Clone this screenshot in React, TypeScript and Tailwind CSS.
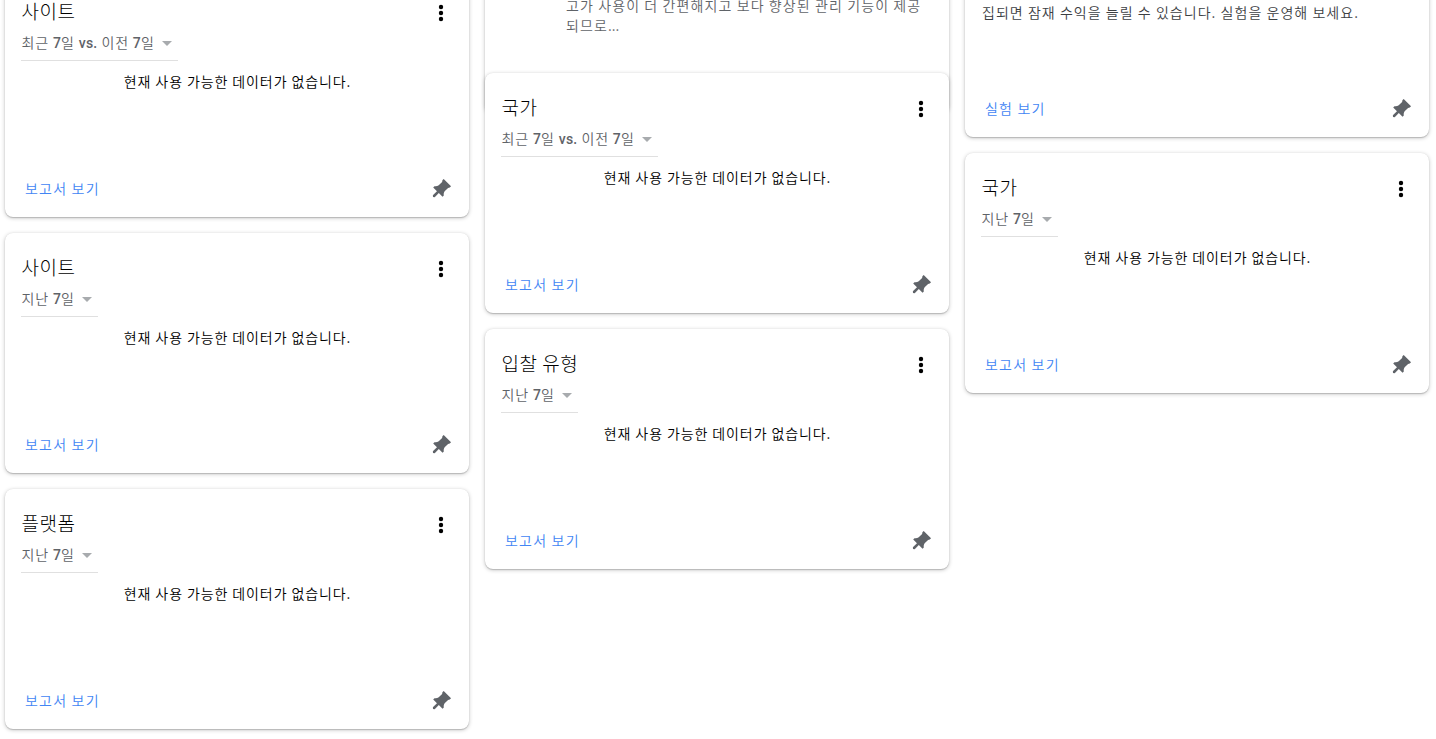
import type { ReactNode } from 'react';

type ReportCardProps = {
  title: string;
  period: ReactNode;
  className?: string;
};

const Num = ({ children }: { children: ReactNode }) => (
  <span className="font-medium tracking-[0.2px] font-['Roboto','Noto_Sans_CJK_KR',sans-serif]">{children}</span>
);

const lastWeek = (
  <>
    지난 <Num>7</Num>일
  </>
);

const weekOverWeek = (
  <>
    최근 <Num>7</Num>일 <Num>vs.</Num> 이전 <Num>7</Num>일
  </>
);

const PinIcon = () => (
  <svg viewBox="0 0 24 24" className="mt-0.5 mr-px h-6 w-6 shrink-0 fill-[#5f6368]">
    <path
      transform="rotate(45 12 12)"
      d="M6.8 1.6h10.4v1.8l-1 1.4v4.8c.3 1.6 1.2 2.8 2.4 3.6v1.8h-5.3v5.8l-1.3 1.1-1.3-1.1v-5.8H5.4v-1.8c1.2-.8 2.1-2 2.4-3.6V4.8l-1-1.4z"
    />
  </svg>
);

const MenuIcon = () => (
  <svg viewBox="0 0 24 24" className="h-6 w-6 shrink-0 fill-black">
    <circle cx="12" cy="6" r="2.2" />
    <circle cx="12" cy="12" r="2.2" />
    <circle cx="12" cy="18" r="2.2" />
  </svg>
);

const Card = ({ className = '', children }: { className?: string; children: ReactNode }) => (
  <section
    className={`flex shrink-0 flex-col rounded-lg bg-white px-4 shadow-[0_1px_4px_0_rgba(0,0,0,0.23),0_1px_1px_0_rgba(0,0,0,0.16),0_0_1px_0_rgba(0,0,0,0.08)] ${className}`}
  >
    {children}
  </section>
);

const CardFooter = ({ label }: { label: string }) => (
  <div className="mt-auto flex h-14 items-center justify-between pl-1">
    <a href="#" className="pb-0.5 tracking-[1.2px] text-[#4285f4]">
      {label}
    </a>
    <PinIcon />
  </div>
);

const ReportCard = ({ title, period, className = '' }: ReportCardProps) => (
  <Card className={`h-60 ${className}`}>
    <div className="flex items-start justify-between pt-5">
      <h2 className="h-7 pl-[0.5px] font-['Noto_Sans_CJK_KR',sans-serif] text-[19px] leading-7 font-light tracking-[0.5px] text-black">
        {title}
      </h2>
      <button className="mt-1">
        <MenuIcon />
      </button>
    </div>
    <button className="flex h-9 items-center gap-[7px] self-start border-b border-[#e0e0e0] pr-1.5 tracking-[0.85px] text-[#5f6368]">
      <span className="pl-[0.5px] whitespace-nowrap">{period}</span>
      <svg viewBox="0 0 10 5" className="mt-px h-[5px] w-[10px] fill-[#a8abae]">
        <path d="M0 0h10L5 5z" />
      </svg>
    </button>
    <p className="mt-2.5 pl-px text-center tracking-[0.9px] text-black">현재 사용 가능한 데이터가 없습니다.</p>
    <CardFooter label="보고서 보기" />
  </Card>
);

export default function App() {
  return (
    <main className="flex h-[739px] w-full items-start gap-4 overflow-hidden bg-white pl-[5px] font-['Noto_Sans_CJK_KR_DemiLight','Noto_Sans_CJK_KR',sans-serif] text-sm leading-5 font-[350]">
      <div className="-mt-[23px] flex w-[464px] shrink-0 flex-col gap-4">
        <ReportCard title="사이트" period={weekOverWeek} />
        <ReportCard title="사이트" period={lastWeek} />
        <ReportCard title="플랫폼" period={lastWeek} />
      </div>

      <div className="-mt-[27px] flex w-[464px] shrink-0 flex-col">
        <Card className="h-[140px]">
          <p className="pt-[22px] pl-[65px] tracking-[1.1px] whitespace-nowrap text-[#5f6368]">
            고가 사용이 더 간편해지고 보다 향상된 관리 기능이 제공
            <br />
            되므로<span className="tracking-normal">...</span>
          </p>
        </Card>
        <ReportCard title="국가" period={weekOverWeek} className="-mt-10" />
        <ReportCard title="입찰 유형" period={lastWeek} className="mt-4" />
      </div>

      <div className="-mt-[43px] flex w-[464px] shrink-0 flex-col gap-4">
        <Card className="h-[180px]">
          <p className="pt-[45px] pl-px tracking-[1.04px] whitespace-nowrap text-[#3c4043]">
            집되면 잠재 수익을 늘릴 수 있습니다. 실험을 운영해 보세요.
          </p>
          <CardFooter label="실험 보기" />
        </Card>
        <ReportCard title="국가" period={lastWeek} />
      </div>
    </main>
  );
}
